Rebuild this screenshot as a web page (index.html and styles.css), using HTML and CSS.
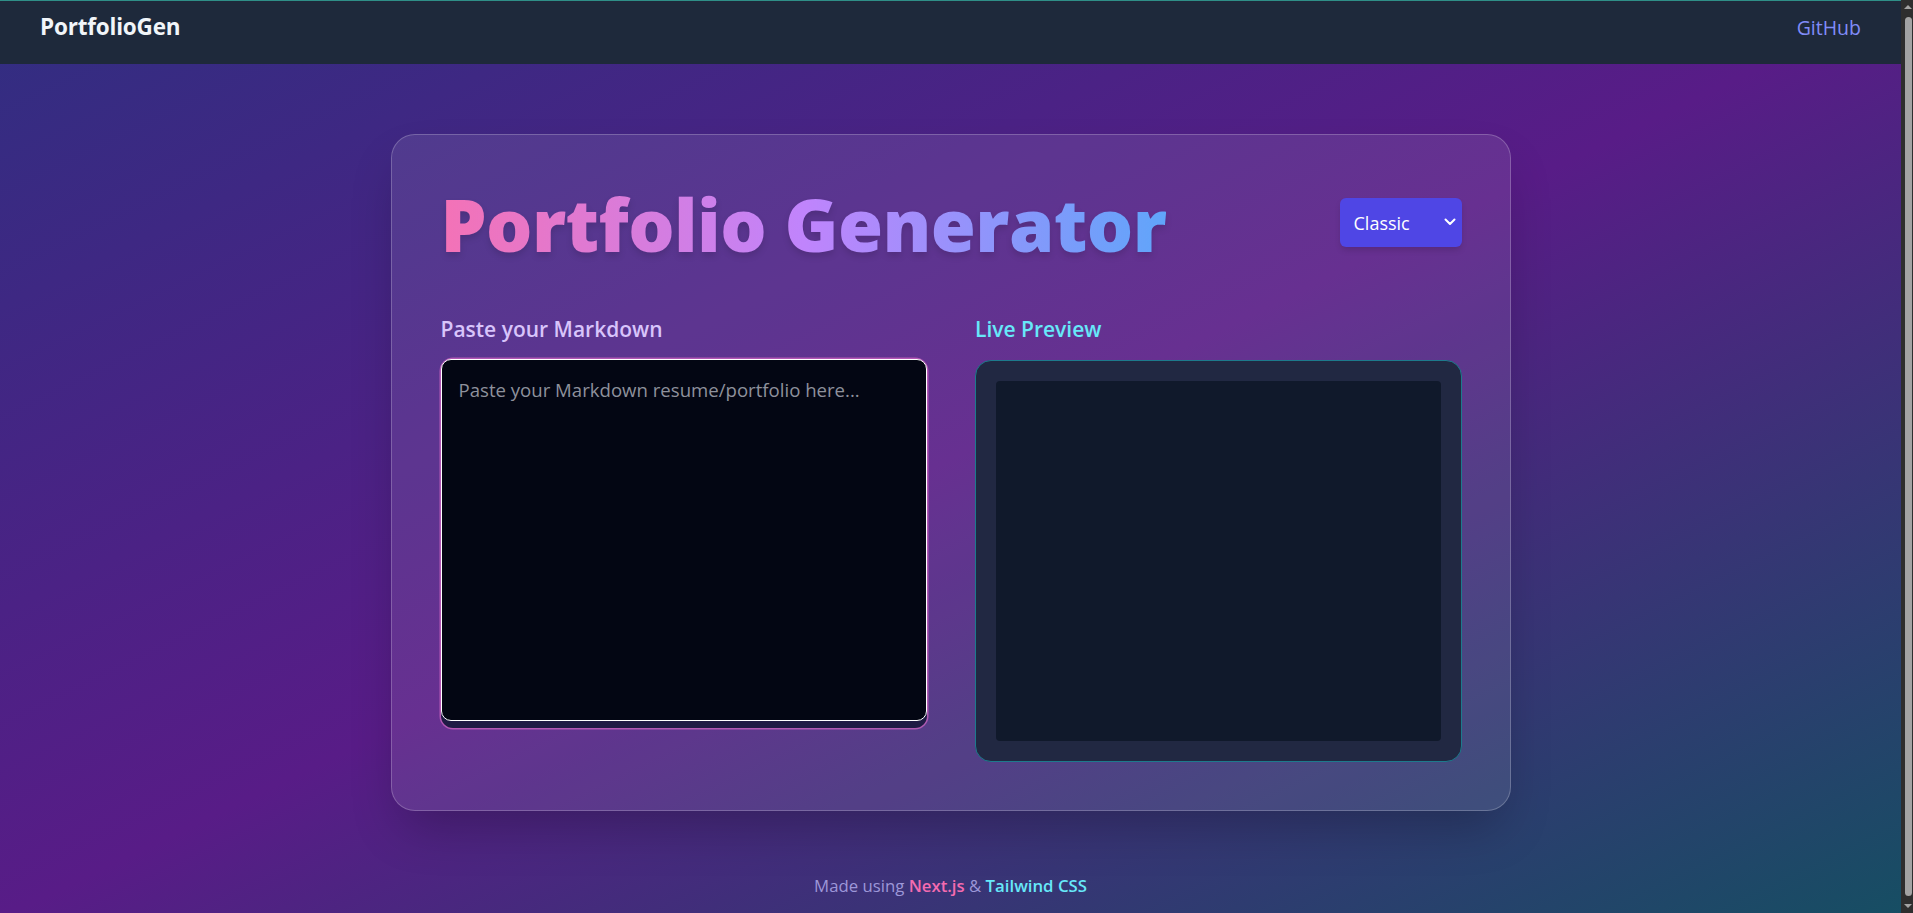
FILE: index.html
```html
<!DOCTYPE html>
<html lang="en">
<head>
<meta charset="utf-8">
<title>PortfolioGen</title>
<link rel="stylesheet" href="styles.css">
</head>
<body>
  <header class="topbar">
    <span class="brand">PortfolioGen</span>
    <a class="gh-link" href="#">GitHub</a>
  </header>

  <main class="main">
    <section class="card">
      <div class="card-head">
        <h1 class="title">Portfolio Generator</h1>
        <div class="select-wrap">
          <select class="theme-select">
            <option>Classic</option>
            <option>Modern</option>
            <option>Minimal</option>
          </select>
          <svg class="chevron" width="12" height="8" viewBox="0 0 12 8" aria-hidden="true">
            <path d="M1.5 1.5 L6 6 L10.5 1.5" fill="none" stroke="#ffffff" stroke-width="2" stroke-linecap="round" stroke-linejoin="round"/>
          </svg>
        </div>
      </div>

      <div class="cols">
        <div class="col">
          <label class="col-label label-md" for="md">Paste your Markdown</label>
          <div class="editor">
            <textarea id="md" class="md-input" placeholder="Paste your Markdown resume/portfolio here..."></textarea>
          </div>
        </div>
        <div class="col">
          <h2 class="col-label label-live">Live Preview</h2>
          <div class="preview">
            <div class="preview-inner"></div>
          </div>
        </div>
      </div>
    </section>
  </main>

  <footer class="footer">
    Made using <span class="ft-next">Next.js</span> &amp; <span class="ft-tw">Tailwind CSS</span>
  </footer>

  <div class="vscroll" aria-hidden="true">
    <span class="vs-up"></span>
    <span class="vs-thumb"></span>
    <span class="vs-down"></span>
  </div>
</body>
</html>
```

FILE: styles.css
```css
html {
  background: #2c2c2c;
}

* {
  box-sizing: border-box;
}

body {
  margin: 0 12px 0 0;
  min-height: 100vh;
  font-family: "Open Sans", "Noto Sans", sans-serif;
  color: #fff;
  background: linear-gradient(to bottom right, #312e81 0%, #581c87 50%, #164e63 100%);
  display: flex;
  flex-direction: column;
}

.topbar {
  height: 64px;
  padding: 10px 40px 0;
  background: #1e293b;
  border-top: 1px solid #2f8f88;
  display: flex;
  justify-content: space-between;
  align-items: flex-start;
}

.brand {
  font-size: 22.5px;
  line-height: 32px;
  font-weight: 700;
  color: #f1f5f9;
  letter-spacing: -0.2px;
}

.gh-link {
  font-size: 19.5px;
  line-height: 33px;
  color: #818cf8;
  text-decoration: none;
  font-weight: 500;
}

.main {
  padding-top: 70px;
  display: flex;
  justify-content: center;
}

.card {
  width: 1120px;
  padding: 48px 48px 48px 49px;
  border: 1px solid rgba(255, 255, 255, 0.22);
  border-radius: 24px;
  background: rgba(255, 255, 255, 0.09);
  box-shadow: 0 25px 50px -12px rgba(0, 0, 0, 0.25);
}

.card-head {
  display: flex;
  justify-content: space-between;
  align-items: flex-start;
  margin-bottom: 50px;
}

.title {
  margin: 0;
  font-family: "Open Sans", sans-serif;
  font-weight: 800;
  font-size: 73px;
  line-height: 82px;
  letter-spacing: -0.6px;
  background: linear-gradient(to right, #f472b6, #c084fc 50%, #60a5fa);
  -webkit-background-clip: text;
  background-clip: text;
  color: transparent;
  filter: drop-shadow(0 4px 3px rgba(0, 0, 0, 0.12));
}

.select-wrap {
  position: relative;
  margin-top: 15px;
}

.theme-select {
  appearance: none;
  -webkit-appearance: none;
  width: 122px;
  height: 49px;
  padding: 0 30px 0 14px;
  border: none;
  border-radius: 6px;
  background: #4f46e5;
  color: #fff;
  font-family: "Open Sans", "Noto Sans", sans-serif;
  font-size: 18px;
  box-shadow: 0 4px 6px -1px rgba(0, 0, 0, 0.15);
}

.chevron {
  position: absolute;
  right: 6px;
  top: 20px;
  pointer-events: none;
}

.cols {
  display: grid;
  grid-template-columns: 1fr 1fr;
  column-gap: 48px;
}

.col {
  display: flex;
  flex-direction: column;
}

.col-label {
  margin: 0 0 16px;
  font-size: 21px;
  line-height: 28px;
  font-weight: 600;
}

.label-md {
  color: #d8c4fb;
}

.label-live {
  color: #67e8f9;
  margin-bottom: 17px;
}

.editor {
  border-radius: 12px;
  background: #1f1b45;
  box-shadow: 0 0 0 1.5px rgba(214, 104, 196, 0.7);
  padding-bottom: 7px;
}

.md-input {
  display: block;
  width: 100%;
  height: 362px;
  padding: 16px 17px;
  border: 1px solid #ffffff;
  border-radius: 10px;
  background: #030613;
  color: #e5e7eb;
  font-family: "Open Sans", "Noto Sans", sans-serif;
  font-size: 18.6px;
  line-height: 28px;
  resize: none;
  outline: none;
}

.md-input::placeholder {
  color: #8e919c;
}

.preview {
  height: 402px;
  padding: 20px;
  border: 1px solid #1d7a8c;
  border-radius: 16px;
  background: #212842;
}

.preview-inner {
  height: 100%;
  border-radius: 4px;
  background: #10192b;
}

.footer {
  margin-top: 63px;
  padding-bottom: 20px;
  text-align: center;
  font-size: 16.75px;
  line-height: 24px;
  color: #9d97d8;
}

.ft-next {
  color: #f46bb0;
  font-weight: 600;
}

.ft-tw {
  color: #67e8f9;
  font-weight: 600;
}

/* window scrollbar chrome */
.vscroll {
  position: fixed;
  top: 0;
  right: 0;
  width: 12px;
  height: 100vh;
  background: #2e2e2e;
  display: flex;
  flex-direction: column;
  align-items: center;
  padding: 5px 0 5px;
}

.vs-up,
.vs-down {
  width: 0;
  height: 0;
  border-left: 4px solid transparent;
  border-right: 4px solid transparent;
  margin-left: 2px;
}

.vs-up {
  border-bottom: 4px solid #a3a3a3;
}

.vs-down {
  border-top: 4px solid #a3a3a3;
}

.vs-thumb {
  flex: 1;
  width: 7px;
  margin: 8px 0 8px 3px;
  border-radius: 4px;
  background: #a3a3a3;
}
```
